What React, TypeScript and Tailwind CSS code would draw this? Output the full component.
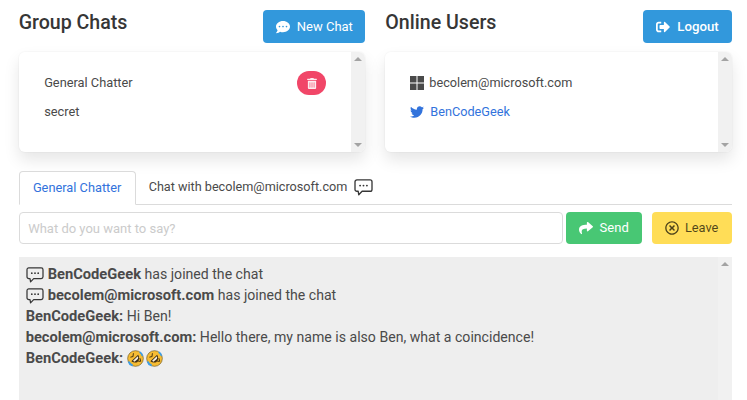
import { FaCommentDots, FaTrashAlt, FaTwitter, FaSignOutAlt, FaShare, FaRegTimesCircle } from "react-icons/fa";

function Scrollbar() {
  return (
    <div className="flex w-[14px] shrink-0 flex-col items-center justify-between bg-[#f1f1f1] py-[5px]">
      <div className="h-0 w-0 border-x-[4px] border-b-[4px] border-x-transparent border-b-[#a3a3a3]" />
      <div className="h-0 w-0 border-x-[4px] border-t-[4px] border-x-transparent border-t-[#a3a3a3]" />
    </div>
  );
}

function ChatIcon({ className }: { className?: string }) {
  return (
    <svg viewBox="0 0 20 18" className={className} fill="none" stroke="#363636" strokeWidth="1.4">
      <path d="M3 1h14a2 2 0 0 1 2 2v8a2 2 0 0 1-2 2H8.5l-3.5 3.7-.6-3.7H3a2 2 0 0 1-2-2V3a2 2 0 0 1 2-2z" strokeLinejoin="round" />
      <circle cx="6.4" cy="7" r="1" fill="#363636" stroke="none" />
      <circle cx="10" cy="7" r="1" fill="#363636" stroke="none" />
      <circle cx="13.6" cy="7" r="1" fill="#363636" stroke="none" />
    </svg>
  );
}

function WindowsIcon() {
  return (
    <svg viewBox="0 0 14 14" className="h-[14px] w-[14px]" fill="#4a4a4a">
      <rect x="0" y="0" width="6.5" height="6.5" />
      <rect x="7.5" y="0" width="6.5" height="6.5" />
      <rect x="0" y="7.5" width="6.5" height="6.5" />
      <rect x="7.5" y="7.5" width="6.5" height="6.5" />
    </svg>
  );
}

function Rofl() {
  return (
    <svg viewBox="0 0 18 18" className="h-[17px] w-[17px]">
      <circle cx="9" cy="9" r="8.3" fill="#f6bc34" stroke="#6e5a26" strokeWidth="0.7" />
      <path d="M4.6 11.8 L11.8 5 Q14.4 9.2 10.8 13 Q7.2 14 4.6 11.8z" fill="#3d2c10" />
      <path d="M6.4 11.4 L11.4 6.6 Q12.4 8.2 11.4 9.4 L8 12.4 Q7 12.2 6.4 11.4z" fill="#f7efe0" />
      <path d="M3.6 7.6 l3.2 -.8 M6.8 3.4 l-.4 3 M11.4 11.6 l3 .6 M13.6 8.6 l1 3.4" stroke="#3d2c10" strokeWidth="1" fill="none" />
      <path d="M2.2 13 q.6 2.4 3 3" stroke="#3c9de6" strokeWidth="2.2" fill="none" strokeLinecap="round" />
      <path d="M14 2.6 q1.8 1 2 3" stroke="#3c9de6" strokeWidth="1.8" fill="none" strokeLinecap="round" />
    </svg>
  );
}

export default function App() {
  return (
    <div className="h-[400px] w-[747px] overflow-hidden bg-white pl-[18.67px] pr-[15px] pt-[10px] text-[#4a4a4a] [font-family:Roboto,sans-serif]">
      <div className="grid grid-cols-2 gap-x-[20px]">
        <section>
          <div className="flex h-[33px] items-start justify-between">
            <h2 className="text-[19.6px] font-medium leading-[25px] text-[#363636]">Group Chats</h2>
            <button className="flex h-[33px] w-[102px] items-center justify-center gap-[7px] rounded-[4px] bg-[#3298dc] text-[13px] text-white">
              <FaCommentDots className="h-[14px] w-[14px]" />
              New Chat
            </button>
          </div>
          <div className="mt-[9px] flex h-[100px] overflow-hidden rounded-[6px] bg-white shadow-[0_8px_16px_rgba(10,10,10,0.1),0_0_0_1px_rgba(10,10,10,0.02)]">
            <div className="flex-1 pl-[25.5px] pr-[25px] pt-[19px] text-[12.8px]">
              <div className="flex h-[24px] items-center justify-between">
                <span>General Chatter</span>
                <span className="flex h-[24px] w-[29px] items-center justify-center rounded-full bg-[#f14668] text-white">
                  <FaTrashAlt className="h-[11px] w-[10px] opacity-90" />
                </span>
              </div>
              <div className="mt-[5px] leading-[24px]">secret</div>
            </div>
            <Scrollbar />
          </div>
        </section>
        <section>
          <div className="flex h-[33px] items-start justify-between">
            <h2 className="text-[19.6px] font-medium leading-[25px] text-[#363636]">Online Users</h2>
            <button className="flex h-[33px] w-[89px] items-center justify-center gap-[7px] rounded-[4px] bg-[#3298dc] text-[13.2px] font-medium text-white">
              <FaSignOutAlt className="h-[14px] w-[14px]" />
              Logout
            </button>
          </div>
          <div className="mt-[9px] flex h-[100px] overflow-hidden rounded-[6px] bg-white shadow-[0_8px_16px_rgba(10,10,10,0.1),0_0_0_1px_rgba(10,10,10,0.02)]">
            <div className="flex-1 pl-[25px] pt-[19px] text-[12.7px]">
              <div className="flex h-[24px] items-center gap-[5px]">
                <WindowsIcon />
                <span>becolem@microsoft.com</span>
              </div>
              <div className="mt-[5px] flex h-[24px] items-center gap-[6px] text-[#3273dc]">
                <FaTwitter className="h-[14px] w-[14px]" />
                <span>BenCodeGeek</span>
              </div>
            </div>
            <Scrollbar />
          </div>
        </section>
      </div>

      <div className="mt-[19px] flex h-[34px] border-b border-[#dbdbdb] text-[12.8px]">
        <div className="-mb-px flex h-[34px] w-[117px] items-center justify-center rounded-t-[4px] border border-[#dbdbdb] border-b-white bg-white text-[#3273dc]">
          General Chatter
        </div>
        <div className="flex items-center gap-[7px] pl-[13px] text-[12.65px]">
          <span>Chat with becolem@microsoft.com</span>
          <ChatIcon className="h-[17px] w-[19px]" />
        </div>
      </div>

      <div className="mt-[7px] flex h-[32px]">
        <input
          className="h-full w-[544px] rounded-[4px] border border-[#dbdbdb] bg-white px-[8.5px] text-[13px] outline-none placeholder:text-[#cbcbcb]"
          placeholder="What do you want to say?"
          readOnly
        />
        <button className="ml-[3px] flex w-[76px] items-center justify-center gap-[7px] rounded-[4px] bg-[#48c774] text-[13px] text-white">
          <FaShare className="h-[14px] w-[14px]" />
          Send
        </button>
        <button className="ml-[10px] flex w-[80px] items-center justify-center gap-[6px] rounded-[4px] bg-[#ffdd57] text-[12.8px] text-[rgba(0,0,0,0.7)]">
          <FaRegTimesCircle className="h-[14px] w-[14px]" />
          Leave
        </button>
      </div>

      <div className="mt-[13px] flex h-[160px] bg-[#eeeeee]">
        <div className="flex-1 pl-[7px] pt-[7px] text-[14.1px] leading-[21px] [&_b]:text-[14.7px]">
          <div className="flex items-center gap-[4px]"><ChatIcon className="h-[16px] w-[18px]" /><span><b>BenCodeGeek</b> has joined the chat</span></div>
          <div className="flex items-center gap-[4px]"><ChatIcon className="h-[16px] w-[18px]" /><span><b>becolem@microsoft.com</b> has joined the chat</span></div>
          <div><b>BenCodeGeek:</b> Hi Ben!</div>
          <div><b>becolem@microsoft.com:</b> Hello there, my name is also Ben, what a coincidence!</div>
          <div className="flex items-center gap-[2px]"><b className="mr-[2px]">BenCodeGeek:</b><Rofl /><Rofl /></div>
        </div>
        <div className="flex w-[14px] shrink-0 flex-col items-center bg-[#f1f1f1] pt-[5px]">
          <div className="h-0 w-0 border-x-[4px] border-b-[4px] border-x-transparent border-b-[#a3a3a3]" />
        </div>
      </div>
    </div>
  );
}
